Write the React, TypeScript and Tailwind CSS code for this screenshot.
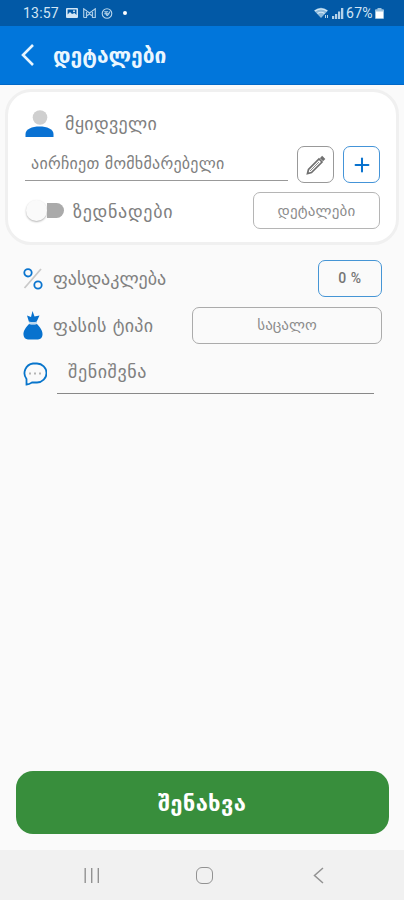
import { Plus } from "lucide-react";

function StatusBar() {
  return (
    <div className="flex h-[26px] shrink-0 items-center bg-[#0259a6] pl-[23px] pr-[20px] font-['Roboto',sans-serif] text-[#d3e6f5]">
      <span className="w-[36px] whitespace-nowrap text-[14px] leading-[26px] tracking-[0.2px]">13:57</span>
      <svg className="ml-[7px] h-[10px] w-[12px]" viewBox="0 0 12 10">
        <path fillRule="evenodd" fill="currentColor" d="M1 0h10q1 0 1 1v8q0 1-1 1H1q-1 0-1-1V1q0-1 1-1Zm.6 1.500v5L4 4l2 2 2.500-1 2 2V1.500Z" />
        <circle cx="8" cy="3.200" r="1" fill="currentColor" />
      </svg>
      <svg className="ml-[5px] h-[10px] w-[13px]" viewBox="0 0 13 10" fill="none" stroke="#a9cbe6">
        <path d="M.7 9.500V.800L6.500 5 12.300.800v8.700H9.500V4M.7 9.500h2.800V4M3.500 8l3-2 3 2M3.500 2v5M9.500 2v5" strokeWidth="1.200" />
      </svg>
      <svg className="ml-[5px] h-[11px] w-[12px]" viewBox="0 0 12 11" fill="none" stroke="#b9d6ec">
        <circle cx="6" cy="5.500" r="4.800" strokeWidth="1.100" />
        <path d="M3.200 3.800h4M3.200 5.800h5.300M5 3.800v1.700q0 2 1.600 2l2.400-4" strokeWidth="1.100" />
      </svg>
      <span className="ml-[10px] h-[4px] w-[4px] rounded-full bg-white" />
      <svg className="ml-auto h-[12px] w-[15px]" viewBox="0 0 15 12">
        <path d="M0 3.500Q7 -2 14 3.500L7 11Z" fill="#8db9da" />
        <path d="M1 4Q7 0 13 4M3.500 6.500Q7 4 10.500 6.500" fill="none" stroke="#d5eaf7" strokeWidth="1.200" />
        <path d="M11.500 8v3M13.500 8v3" stroke="#b7d5ea" />
      </svg>
      <svg className="ml-[3px] h-[11px] w-[12px]" viewBox="0 0 12 11" fill="#b5d2e9">
        <path d="M0 8h2.200v3H0zM3 6h2.200v5H3zM6 3.500h2.200V11H6zM9 0h2.300v11H9z" />
      </svg>
      <span className="ml-[2px] w-[28px] whitespace-nowrap text-[14px] leading-[26px] tracking-[0.3px]">67%</span>
      <svg className="ml-[1px] h-[11px] w-[9px]" viewBox="0 0 9 11">
        <path d="M2.500 0h4v1.200H8q1 0 1 1V10q0 1-1 1H1q-1 0-1-1V2.200q0-1 1-1h1.500Z" fill="#9cc2df" />
        <path d="M1 3.500h7V10H1z" fill="#fff" />
      </svg>
    </div>
  );
}

function Header() {
  return (
    <header className="flex h-[59px] shrink-0 items-center border-b border-[#0068c8] bg-[#0176db] pl-[20px]">
      <svg className="h-[22px] w-[15px]" viewBox="0 0 15 22" fill="none" stroke="#e6f5ff" strokeWidth="2.600">
        <path d="M13 1 3 11l10 10" />
      </svg>
      <h1 className="ml-[18px] mt-[2px] whitespace-nowrap text-[21px] font-bold leading-[24px] text-[#eaf6ff]">დეტალები</h1>
    </header>
  );
}

function BuyerCard() {
  return (
    <section className="mx-[5px] mt-[4px] h-[156px] shrink-0 rounded-[26px] border-[3px] border-[#f0f0f0] bg-white pl-[17px] pr-[16px]">
      <div className="flex h-[58px] items-center pt-[6px]">
        <svg className="h-[28px] w-[29px]" viewBox="0 0 29 28">
          <circle cx="15" cy="7.500" r="7.300" fill="#cfcfcf" />
          <path d="M.5 27v-3C.5 19 7 16.500 14.500 16.500S28.500 19 28.500 24v3Z" fill="#0a72d3" />
        </svg>
        <span className="ml-[11px] whitespace-nowrap text-[18px] leading-[22px] tracking-[0.3px]">მყიდველი</span>
      </div>
      <div className="-mt-[4px] flex h-[36px]">
        <div className="mt-[2px] h-[33px] w-[263px] whitespace-nowrap border-b border-[#999] pl-[6px] text-[16px] leading-[31px] tracking-[0.25px]">
          აირჩიეთ მომხმარებელი
        </div>
        <button className="ml-[9px] flex h-[37px] w-[37px] items-center justify-center rounded-[7px] border border-[#999]">
          <svg className="h-[20px] w-[20px]" viewBox="0 0 20 20" fill="none" stroke="#707070" strokeWidth="1.700">
            <path d="m1.500 18.500 1-4L13 4l3 3L5.500 17.500Z" />
            <path d="m15 2 3.200 3.200" strokeWidth="3.200" />
            <path d="m4 16 9-9" strokeWidth=".8" />
          </svg>
        </button>
        <button className="ml-[9px] flex h-[37px] w-[37px] items-center justify-center rounded-[7px] border border-[#4494d8]">
          <Plus size={22} strokeWidth={2.200} color="#0872ce" />
        </button>
      </div>
      <div className="mt-[10px] flex h-[37px] items-center">
        <div className="flex h-[24px] w-[39px] items-center">
          <div className="ml-[1px] h-[21px] w-[21px] rounded-full bg-[#fafafa] shadow-[0_1px_2px_rgba(0,0,0,0.3)]" />
          <div className="h-[15px] w-[17px] rounded-r-full bg-[#aaa]" />
        </div>
        <span className="ml-[9px] mt-[2px] whitespace-nowrap text-[18px] leading-[22px] tracking-[0.7px]">ზედნადები</span>
        <button className="ml-auto h-[37px] w-[127px] whitespace-nowrap rounded-[7px] border border-[#b5b5b5] pt-[2px] text-[15px] tracking-[0.2px] text-[#8c8c8c]">
          დეტალები
        </button>
      </div>
    </section>
  );
}

function Options() {
  return (
    <div className="pl-[23px] pr-[22px]">
      <div className="mt-[15px] flex h-[37px] items-center">
        <svg className="h-[22px] w-[20px]" viewBox="0 0 20 22" fill="none">
          <path d="M18 1 1.500 20" stroke="#c9c9c9" strokeWidth="1.800" />
          <circle cx="5" cy="4.800" r="3.700" stroke="#0b75cf" strokeWidth="1.800" />
          <circle cx="15" cy="17" r="3.700" stroke="#0b75cf" strokeWidth="1.800" />
        </svg>
        <span className="ml-[10px] whitespace-nowrap text-[18px] leading-[22px]">ფასდაკლება</span>
        <button className="ml-auto h-[37px] w-[64px] rounded-[7px] border border-[#4595d5] font-['Roboto',sans-serif] text-[14px] font-medium tracking-[0.6px] text-[#757575]">0 %</button>
      </div>
      <div className="mt-[10px] flex h-[37px] items-center">
        <svg className="h-[29px] w-[20px]" viewBox="0 0 20 29" fill="#0872ce">
          <path d="M6 11 4 4.500l4 1.500L9.500 0l2 5.500 5-1-3 6.500Z" />
          <path d="M6 10.500q4 1 8 0v2q-4 1-8 0Z" fill="#bad7ed" />
          <path d="M6 13q4 1 8 0c3 3 6 7 5.500 11Q19 28 15 28.500H5Q1 28 .5 24C0 20 3 16 6 13Z" />
        </svg>
        <span className="ml-[10px] whitespace-nowrap text-[18px] leading-[22px] tracking-[0.3px]">ფასის ტიპი</span>
        <button className="ml-auto h-[37px] w-[190px] whitespace-nowrap rounded-[7px] border border-[#ababab] text-[15px] text-[#8c8c8c]">საცალო</button>
      </div>
      <div className="mt-[11px] flex h-[40px]">
        <svg className="mt-[7px] h-[24px] w-[24px]" viewBox="0 0 24 24" fill="none">
          <path d="M3.500 22.500V17A9.700 9.700 0 0 1 10 1.500h4a9.500 9.500 0 0 1 0 19H9Q6 22.500 3.500 22.500Z" stroke="#0875cb" strokeWidth="1.800" />
          <path d="M6 11.500h2m3 0h2m3 0h2" stroke="#b5b5b5" strokeWidth="1.800" />
        </svg>
        <div className="ml-[10px] h-[39px] w-[317px] whitespace-nowrap border-b border-[#888] pl-[11px] text-[18px] leading-[34px] tracking-[0.6px]">შენიშვნა</div>
      </div>
    </div>
  );
}

function NavigationBar() {
  return (
    <nav className="flex h-[50px] shrink-0 items-center bg-[#f1f1f1] pl-[84px] pr-[80px]">
      <svg className="h-[17px] w-[16px]" viewBox="0 0 16 17" stroke="#929292" strokeWidth="1.400">
        <path d="M1.200 1v15M7.700 1v15M14.300 1v15" />
      </svg>
      <div className="ml-[96px] h-[17px] w-[17px] rounded-[6px] border-[1.5px] border-[#929292]" />
      <svg className="ml-auto h-[17px] w-[11px]" viewBox="0 0 11 17" fill="none" stroke="#929292" strokeWidth="1.500">
        <path d="m10 1-8.500 7.500L10 16" />
      </svg>
    </nav>
  );
}

export default function App() {
  return (
    <div className="flex h-[900px] w-[404px] flex-col overflow-hidden bg-[#fafafa] font-['DejaVu_Sans',sans-serif] text-[#808080]">
      <StatusBar />
      <Header />
      <BuyerCard />
      <Options />
      <button className="mx-auto mb-[16px] mt-auto h-[63px] w-[373px] shrink-0 rounded-[17px] bg-[#388e3c] pt-[2px] text-[22px] font-bold tracking-[0.3px] text-white">შენახვა</button>
      <NavigationBar />
    </div>
  );
}
